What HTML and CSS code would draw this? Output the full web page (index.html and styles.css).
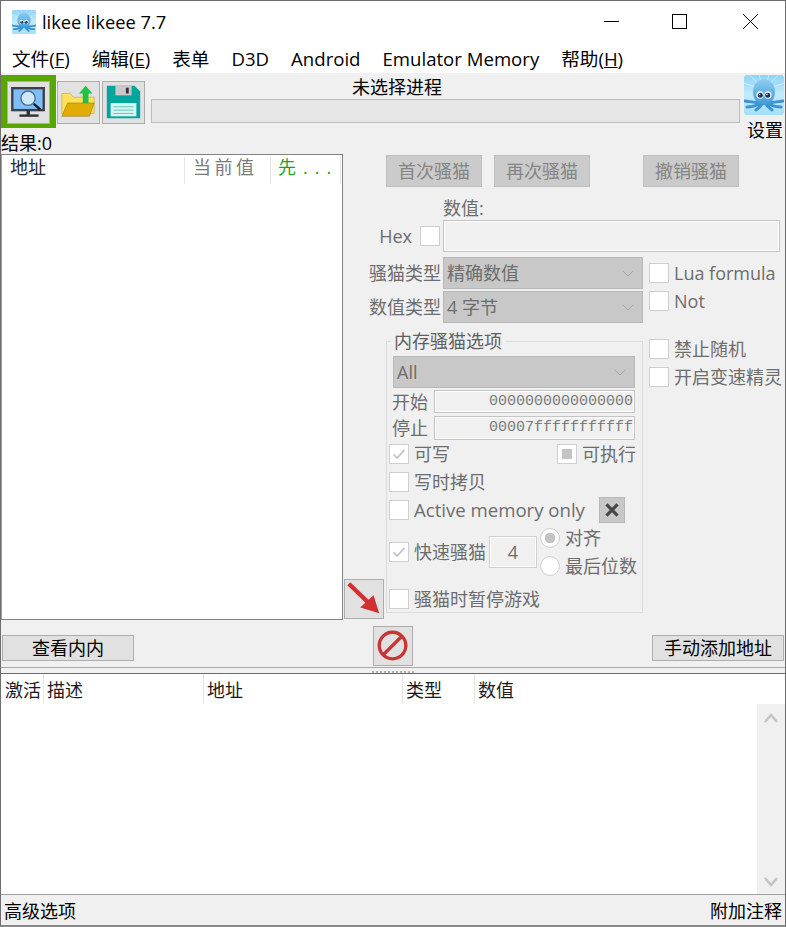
FILE: index.html
```html
<!DOCTYPE html>
<html lang="zh">
<head>
<meta charset="utf-8">
<title>likee likeee 7.7</title>
<link rel="stylesheet" href="styles.css">
</head>
<body>
<svg class="defs" width="0" height="0" aria-hidden="true">
  <defs>
    <linearGradient id="sky" x1="0" y1="0" x2="0" y2="1">
      <stop offset="0" stop-color="#8ed3f6"/>
      <stop offset="0.5" stop-color="#c4ebfb"/>
      <stop offset="1" stop-color="#a6def7"/>
    </linearGradient>
    <linearGradient id="body" x1="0" y1="0" x2="0" y2="1">
      <stop offset="0" stop-color="#8fcdf1"/>
      <stop offset="1" stop-color="#3f9ad6"/>
    </linearGradient>
    <symbol id="octopus" viewBox="0 0 40 40">
      <rect width="40" height="40" rx="3" fill="url(#sky)"/>
      <path d="M20 15L6 0M20 15L15 0M20 15L25 0M20 15L34 0M20 15L0 8M20 15L40 8" stroke="#e6f7fe" stroke-width=".8" opacity=".7"/>
      <path d="M20 25C14 29 9 27 1 26M20 25C15 30 10 32 3 32M20 26C18 30 15 33 12 35M20 26C22 30 25 33 28 35M20 25C25 30 30 32 37 32M20 25C26 29 31 27 39 26" fill="none" stroke="#3a94d2" stroke-width="3" stroke-linecap="round"/>
      <ellipse cx="20" cy="17" rx="11" ry="13" fill="url(#body)"/>
      <ellipse cx="16" cy="20" rx="3.600" ry="3.800" fill="#fff"/>
      <ellipse cx="24" cy="20" rx="3.600" ry="3.800" fill="#fff"/>
      <circle cx="16.300" cy="20.300" r="2.500" fill="#16305c"/>
      <circle cx="23.700" cy="20.300" r="2.500" fill="#16305c"/>
      <circle cx="15.600" cy="19.500" r=".8" fill="#fff"/>
      <circle cx="23" cy="19.500" r=".8" fill="#fff"/>
    </symbol>
    <symbol id="check" viewBox="0 0 20 20">
      <path d="M4 10.500l4 4 8-9" fill="none" stroke="#c4c4c4" stroke-width="2"/>
    </symbol>
    <symbol id="chev" viewBox="0 0 12 7">
      <path d="M.5 .5L6 6l5.500-5.500" fill="none" stroke="#a4a4a4" stroke-width="1"/>
    </symbol>
  </defs>
</svg>

<div class="win">
  <header class="title">
    <svg class="title-icon"><use href="#octopus"/></svg>
    <span class="title-text">likee likeee 7.7</span>
    <div class="controls">
      <svg class="ctl ctl-min" viewBox="0 0 15 15"><path d="M0 7.500H15" stroke="#000" stroke-width="1"/></svg>
      <svg class="ctl ctl-max" viewBox="0 0 15 15"><rect x=".5" y=".5" width="14" height="14" fill="none" stroke="#000"/></svg>
      <svg class="ctl ctl-close" viewBox="0 0 15 15"><path d="M0 0L15 15M15 0L0 15" stroke="#000" stroke-width="1"/></svg>
    </div>
  </header>

  <nav class="menu">
    <span class="mi">文件(<u>F</u>)</span>
    <span class="mi">编辑(<u>E</u>)</span>
    <span class="mi">表单</span>
    <span class="mi">D3D</span>
    <span class="mi">Android</span>
    <span class="mi">Emulator Memory</span>
    <span class="mi">帮助(<u>H</u>)</span>
  </nav>

  <section class="tools">
    <div class="tools-left">
      <div class="tool-row">
        <div class="green">
          <button class="tbtn">
            <svg viewBox="0 0 43 43" class="ticon">
              <rect x="4.500" y="6.500" width="33" height="23" fill="#7fbdfb" stroke="#3e4248" stroke-width="2.500"/>
              <rect x="19.500" y="30" width="3.500" height="5" fill="#2e3136"/>
              <rect x="12" y="34" width="20" height="2.500" fill="#2e3136"/>
              <path d="M27 23L34 29" stroke="#15181c" stroke-width="2.500"/>
              <circle cx="21" cy="17" r="7.500" fill="#cfe8fb" stroke="#4a6f88" stroke-width="1.500"/>
            </svg>
          </button>
        </div>
        <button class="tbtn tbtn-open">
          <svg viewBox="0 0 43 43" class="ticon">
            <path d="M4 33V12h9l3 4h22v17z" fill="#ffe15c" stroke="#a59030" stroke-width=".5"/>
            <path d="M26 22V12h-4l7-8 7 8h-4v10z" fill="#1fc243"/>
            <path d="M4 36l6-14h28l-5 14z" fill="#e0ad04" stroke="#8a7008" stroke-width=".5"/>
          </svg>
        </button>
        <button class="tbtn tbtn-save">
          <svg viewBox="0 0 43 43" class="ticon">
            <path d="M4 4h29l6 6v28H4z" fill="#00a59b"/>
            <rect x="13" y="4" width="17" height="10" fill="#c9c9c9"/>
            <rect x="24" y="6" width="3" height="6" fill="#333"/>
            <rect x="8" y="22" width="27" height="14" fill="#d9f5f2"/>
            <path d="M11 26H32M11 29.500H32M11 33H32" stroke="#5cc4bc" stroke-width="1"/>
          </svg>
        </button>
      </div>
      <div class="result">结果:0</div>
    </div>
    <div class="proc">
      <div class="proc-label">未选择进程</div>
      <div class="proc-bar"></div>
    </div>
    <div class="settings">
      <svg class="set-icon"><use href="#octopus"/></svg>
      <div class="set-label">设置</div>
    </div>
  </section>

  <section class="upper">
    <div class="list">
      <div class="list-head">
        <span class="lh lh-addr">地址</span>
        <span class="lh lh-val">当前值</span>
        <span class="lh lh-first">先...</span>
      </div>
    </div>

    <div class="panel">
      <div class="scan-row">
        <span class="dbtn">首次骚猫</span>
        <span class="dbtn">再次骚猫</span>
        <span class="dbtn dbtn-undo">撤销骚猫</span>
      </div>
      <div class="value-label">数值:</div>
      <div class="value-row">
        <div class="hex"><span>Hex</span><span class="cb"></span></div>
        <div class="value-input"></div>
      </div>
      <div class="type-row">
        <span class="type-label">骚猫类型</span>
        <div class="combo"><span>精确数值</span><svg class="chev"><use href="#chev"/></svg></div>
        <span class="cb cb-side"></span><span class="dis">Lua formula</span>
      </div>
      <div class="type-row type-row2">
        <span class="type-label">数值类型</span>
        <div class="combo"><span>4 字节</span><svg class="chev"><use href="#chev"/></svg></div>
        <span class="cb cb-side cb-not"></span><span class="dis dis-not">Not</span>
      </div>

      <div class="mem-row">
        <div class="arrow-col">
          <button class="ibtn">
            <svg viewBox="0 0 40 40" class="iicon"><path d="M4 4L29 28" stroke="#cf3030" stroke-width="4.500"/><path d="M36 35L16 29L30 16z" fill="#cf3030"/></svg>
          </button>
        </div>
        <fieldset class="group">
          <legend class="legend">内存骚猫选项</legend>
          <div class="combo combo-all"><span>All</span><svg class="chev"><use href="#chev"/></svg></div>
          <div class="range range-start"><span class="range-label">开始</span><div class="range-input">0000000000000000</div></div>
          <div class="range range-stop"><span class="range-label">停止</span><div class="range-input">00007fffffffffff</div></div>
          <div class="opt opt-first">
            <span class="cb"><svg class="tick"><use href="#check"/></svg></span><span class="dis">可写</span>
            <span class="cb cb-exec"><i class="tri"></i></span><span class="dis">可执行</span>
          </div>
          <div class="opt"><span class="cb"></span><span class="dis">写时拷贝</span></div>
          <div class="opt">
            <span class="cb"></span><span class="dis dis-active">Active memory only</span>
            <span class="xbtn"><svg viewBox="0 0 26 26" class="xicon"><path d="M7 7L19 19M19 7L7 19" stroke="#474747" stroke-width="3.500"/></svg></span>
          </div>
          <div class="fast">
            <span class="cb"><svg class="tick"><use href="#check"/></svg></span><span class="dis">快速骚猫</span>
            <div class="align-input">4</div>
            <div class="radios">
              <div class="radio-row"><span class="radio radio-on"></span><span class="dis">对齐</span></div>
              <div class="radio-row"><span class="radio"></span><span class="dis">最后位数</span></div>
            </div>
          </div>
          <div class="opt opt-last"><span class="cb"></span><span class="dis">骚猫时暂停游戏</span></div>
        </fieldset>
        <div class="side">
          <div class="side-row"><span class="cb"></span><span class="dis">禁止随机</span></div>
          <div class="side-row"><span class="cb"></span><span class="dis">开启变速精灵</span></div>
        </div>
      </div>
    </div>
  </section>

  <section class="actions">
    <button class="wbtn">查看内内</button>
    <button class="ibtn ibtn-stop">
      <svg viewBox="0 0 40 40" class="iicon"><circle cx="19.500" cy="19.500" r="14" fill="none" stroke="#c93434" stroke-width="3.500"/><path d="M9.500 29.500L29.500 9.500" stroke="#c93434" stroke-width="3.500"/></svg>
    </button>
    <button class="wbtn wbtn-add">手动添加地址</button>
  </section>

  <div class="split"><span class="grip"></span></div>

  <section class="lower">
    <div class="lower-head">
      <span class="ch ch-a">激活</span>
      <span class="ch ch-b">描述</span>
      <span class="ch ch-c">地址</span>
      <span class="ch ch-d">类型</span>
      <span class="ch ch-e">数值</span>
    </div>
    <div class="lower-body">
      <div class="scroll">
        <svg class="sb-arrow" viewBox="0 0 14 10"><path d="M1 9L7 2l6 7" fill="none" stroke="#c4c4c4" stroke-width="2.500"/></svg>
        <svg class="sb-arrow" viewBox="0 0 14 10"><path d="M1 1l6 7 6-7" fill="none" stroke="#c4c4c4" stroke-width="2.500"/></svg>
      </div>
    </div>
  </section>

  <footer class="status">
    <span>高级选项</span>
    <span>附加注释</span>
  </footer>
</div>
</body>
</html>
```

FILE: styles.css
```css
* { box-sizing: border-box; }
html, body { margin: 0; padding: 0; }
body {
  width: 786px;
  height: 927px;
  overflow: hidden;
  font-family: "Open Sans", "Noto Sans CJK SC", sans-serif;
  font-size: 18px;
  line-height: 20px;
  color: #000;
  background: #f0f0f0;
}
.defs { display: block; height: 0; }
button { font: inherit; padding: 0; margin: 0; }

.win {
  width: 786px;
  height: 927px;
  display: flex;
  flex-direction: column;
  border: 1px solid #6e6e6e;
  border-bottom: 2px solid #8a8a8a;
  background: #f0f0f0;
}

/* title bar */
.title {
  height: 43px;
  flex: none;
  background: #fff;
  display: flex;
  align-items: center;
  padding-left: 11px;
}
.title-icon { width: 24px; height: 24px; flex: none; margin-top: -2px; }
.title-text { margin-left: 6px; font-size: 18.3px; margin-top: -1px; }
.controls { margin-left: auto; display: flex; align-items: center; margin-top: -2px; padding-right: 27px; }
.ctl { display: block; width: 15px; height: 15px; }
.ctl-max { margin-left: 53px; }
.ctl-close { margin-left: 56px; }

/* menu */
.menu {
  height: 29px;
  flex: none;
  background: #fff;
  display: flex;
  align-items: center;
  padding-left: 11px;
  gap: 22px;
  font-size: 18.6px;
}
.mi { white-space: nowrap; }

/* toolbar */
.tools { height: 81px; flex: none; display: flex; }
.tools-left { width: 144px; flex: none; }
.tool-row { display: flex; align-items: flex-start; }
.green {
  width: 55px;
  height: 53px;
  margin-top: 2px;
  background: #58a700;
  padding: 6px 0 0 6px;
}
.tbtn {
  display: block;
  width: 43px;
  height: 43px;
  background: #e1e1e1;
  border: 1px solid #adadad;
}
.tbtn-open { margin: 8px 0 0 1px; }
.tbtn-save { margin: 8px 0 0 2px; }
.ticon { display: block; width: 41px; height: 41px; }
.result { margin-top: 5px; line-height: 20px; white-space: nowrap; }
.proc { width: 589px; margin-left: 6px; flex: none; }
.proc-label { height: 26px; line-height: 29px; padding-left: 201px; }
.proc-bar { height: 24px; background: #e6e6e6; border: 1px solid #bcbcbc; }
.settings { flex: 1; padding: 2px 0 0 4px; }
.set-icon { display: block; width: 40px; height: 40px; }
.set-label { margin: 5px 0 0 3px; white-space: nowrap; }

/* upper */
.upper { height: 466px; flex: none; display: flex; }
.list {
  width: 342px;
  flex: none;
  margin-right: 1px;
  background: #fff;
  border: 1px solid #828282;
  border-left-color: #a0a0a0;
}
.list-head { height: 28px; display: flex; align-items: center; margin-top: 1px; }
.lh { height: 27px; line-height: 20px; white-space: nowrap; padding-left: 8px; border-right: 1px solid #e5e5e5; }
.lh-addr { width: 183px; color: #2a2a2a; }
.lh-val { width: 86px; color: #7a7a7a; letter-spacing: 3.500px; }
.lh-first { width: 70px; color: #1ea01e; letter-spacing: 7px; padding-left: 7px; }

.panel { flex: 1; min-width: 0; }
.scan-row { display: flex; padding: 1px 0 0 42px; }
.dbtn {
  width: 96px;
  height: 32px;
  line-height: 31px;
  text-align: center;
  background: #cbcbcb;
  border: 1px solid #bfbfbf;
  color: #858585;
  margin-right: 12px;
}
.dbtn-undo { margin-left: 41px; }
.value-label { height: 20px; margin: 11px 0 0 99px; line-height: 20px; color: #6d6d6d; }
.value-row { display: flex; margin-top: 2px; height: 32px; }
.hex { width: 99px; display: flex; align-items: center; justify-content: flex-end; padding-right: 3px; color: #6d6d6d; gap: 8px; }
.value-input { width: 337px; background: #f0f0f0; border: 1px solid #c4c4c4; box-shadow: inset 0 0 0 1px #fff; }

.cb {
  display: block;
  width: 20px;
  height: 20px;
  flex: none;
  background: #fff;
  border: 1px solid #cfcfcf;
}
.dis { color: #6d6d6d; white-space: nowrap; }
.dis-active { font-size: 18.6px; }
.tick { display: block; width: 18px; height: 18px; }
.tri { display: block; width: 10px; height: 10px; margin: 4px; background: #c4c4c4; }

.type-row { display: flex; align-items: center; margin-top: 5px; height: 32px; }
.type-row2 { margin-top: 2px; }
.type-label { width: 97px; text-align: right; margin-right: 2px; color: #6d6d6d; white-space: nowrap; }
.combo {
  width: 200px;
  height: 32px;
  flex: none;
  display: flex;
  align-items: center;
  justify-content: space-between;
  padding: 0 8px 0 3px;
  background: #c8c8c8;
  border: 1px solid #b8b8b8;
  color: #6d6d6d;
}
.chev { display: block; width: 12px; height: 7px; }
.combo-all { width: 242px; margin: 5px 0 0 4px; }
.cb-side { margin-left: 6px; margin-right: 5px; }
.cb-not, .dis-not { align-self: flex-start; }

/* memory options */
.mem-row { display: flex; margin-top: 8px; height: 288px; align-items: flex-start; }
.arrow-col { width: 42px; flex: none; align-self: flex-end; }
.ibtn {
  display: block;
  width: 40px;
  height: 40px;
  background: #e1e1e1;
  border: 1px solid #adadad;
}
.iicon { display: block; width: 38px; height: 38px; }
.group {
  width: 257px;
  height: 282px;
  flex: none;
  margin: 0;
  padding: 0 0 0 2px;
  border: 1px solid #dcdcdc;
  min-inline-size: 0;
}
.legend { padding: 0 3px; margin-left: 2px; color: #5f5f5f; height: 20px; line-height: 20px; }
.range { display: flex; align-items: center; margin-left: 3px; }
.range-start { height: 23px; margin-top: 2px; }
.range-stop { height: 24px; margin-top: 3px; }
.range-label { width: 42px; flex: none; color: #6d6d6d; }
.range-input {
  width: 201px;
  height: 100%;
  background: #f0f0f0;
  border: 1px solid #c4c4c4;
  box-shadow: inset 0 0 0 1px #fff;
  font-family: "Liberation Mono", monospace;
  font-size: 15px;
  line-height: 21px;
  text-align: right;
  padding-right: 1px;
  color: #7a7a7a;
}
.opt { display: flex; align-items: center; height: 20px; margin-top: 8px; gap: 5px; }
.opt-first { margin-top: 4px; }
.opt-last { margin-top: 13px; }
.cb-exec { margin-left: 102px; }
.xbtn {
  display: block;
  width: 26px;
  height: 26px;
  margin-left: 9px;
  background: #c8c8c8;
  border: 1px solid #b8b8b8;
}
.xicon { display: block; width: 24px; height: 24px; }
.fast { display: flex; align-items: center; height: 48px; margin-top: 8px; gap: 5px; }
.align-input {
  width: 48px;
  height: 32px;
  margin-left: -2px;
  text-align: center;
  line-height: 30px;
  background: #f0f0f0;
  border: 1px solid #d0d0d0;
  box-shadow: inset 0 0 0 1px #fff;
  color: #6d6d6d;
}
.radios { display: flex; flex-direction: column; gap: 8px; margin-left: -2px; }
.radio-row { display: flex; align-items: center; gap: 5px; height: 20px; }
.radio {
  display: block;
  width: 20px;
  height: 20px;
  border-radius: 50%;
  background: #fff;
  border: 1px solid #cfcfcf;
}
.radio-on { background: radial-gradient(circle, #c4c4c4 0 5px, #fff 5.500px); }
.side { margin-left: 6px; padding-top: 8px; display: flex; flex-direction: column; gap: 8px; }
.side-row { display: flex; align-items: center; height: 20px; gap: 5px; }

/* actions */
.actions { height: 47px; flex: none; display: flex; align-items: flex-end; padding-bottom: 6px; padding-left: 1px; }
.wbtn {
  width: 132px;
  height: 26px;
  flex: none;
  line-height: 22px;
  background: #e1e1e1;
  border: 1px solid #adadad;
  color: #000;
}
.ibtn-stop { margin: 0 0 -5px 239px; }
.wbtn-add { margin-left: 239px; }

/* splitter */
.split {
  height: 6px;
  flex: none;
  border-top: 1px solid #a8a8a8;
  display: flex;
  justify-content: center;
  padding-top: 3px;
}
.grip {
  width: 42px;
  height: 2px;
  margin-right: 1px;
  background: repeating-linear-gradient(90deg, #b0b0b0 0 2px, transparent 2px 4px);
}

/* lower */
.lower {
  flex: 1;
  min-height: 0;
  display: flex;
  flex-direction: column;
  background: #fff;
  border-top: 1px solid #6a6a6a;
  border-bottom: 1px solid #a0a0a0;
}
.lower-head { height: 30px; flex: none; display: flex; align-items: center; }
.ch { height: 30px; line-height: 33px; padding-left: 3px; white-space: nowrap; border-right: 1px solid #e5e5e5; color: #1a1a1a; }
.ch-a { width: 43px; padding-left: 4px; }
.ch-b { width: 160px; }
.ch-c { width: 199px; }
.ch-d { width: 72px; }
.ch-e { border-right: 0; padding-left: 3px; }
.lower-body { flex: 1; min-height: 0; display: flex; justify-content: flex-end; }
.scroll {
  width: 28px;
  background: #f0f0f0;
  display: flex;
  flex-direction: column;
  justify-content: space-between;
  align-items: center;
  padding: 9px 0 7px;
}
.sb-arrow { display: block; width: 14px; height: 10px; }

/* status */
.status {
  height: 30px;
  flex: none;
  display: flex;
  justify-content: space-between;
  align-items: center;
  padding: 2px 3px 0 3px;
}
```
